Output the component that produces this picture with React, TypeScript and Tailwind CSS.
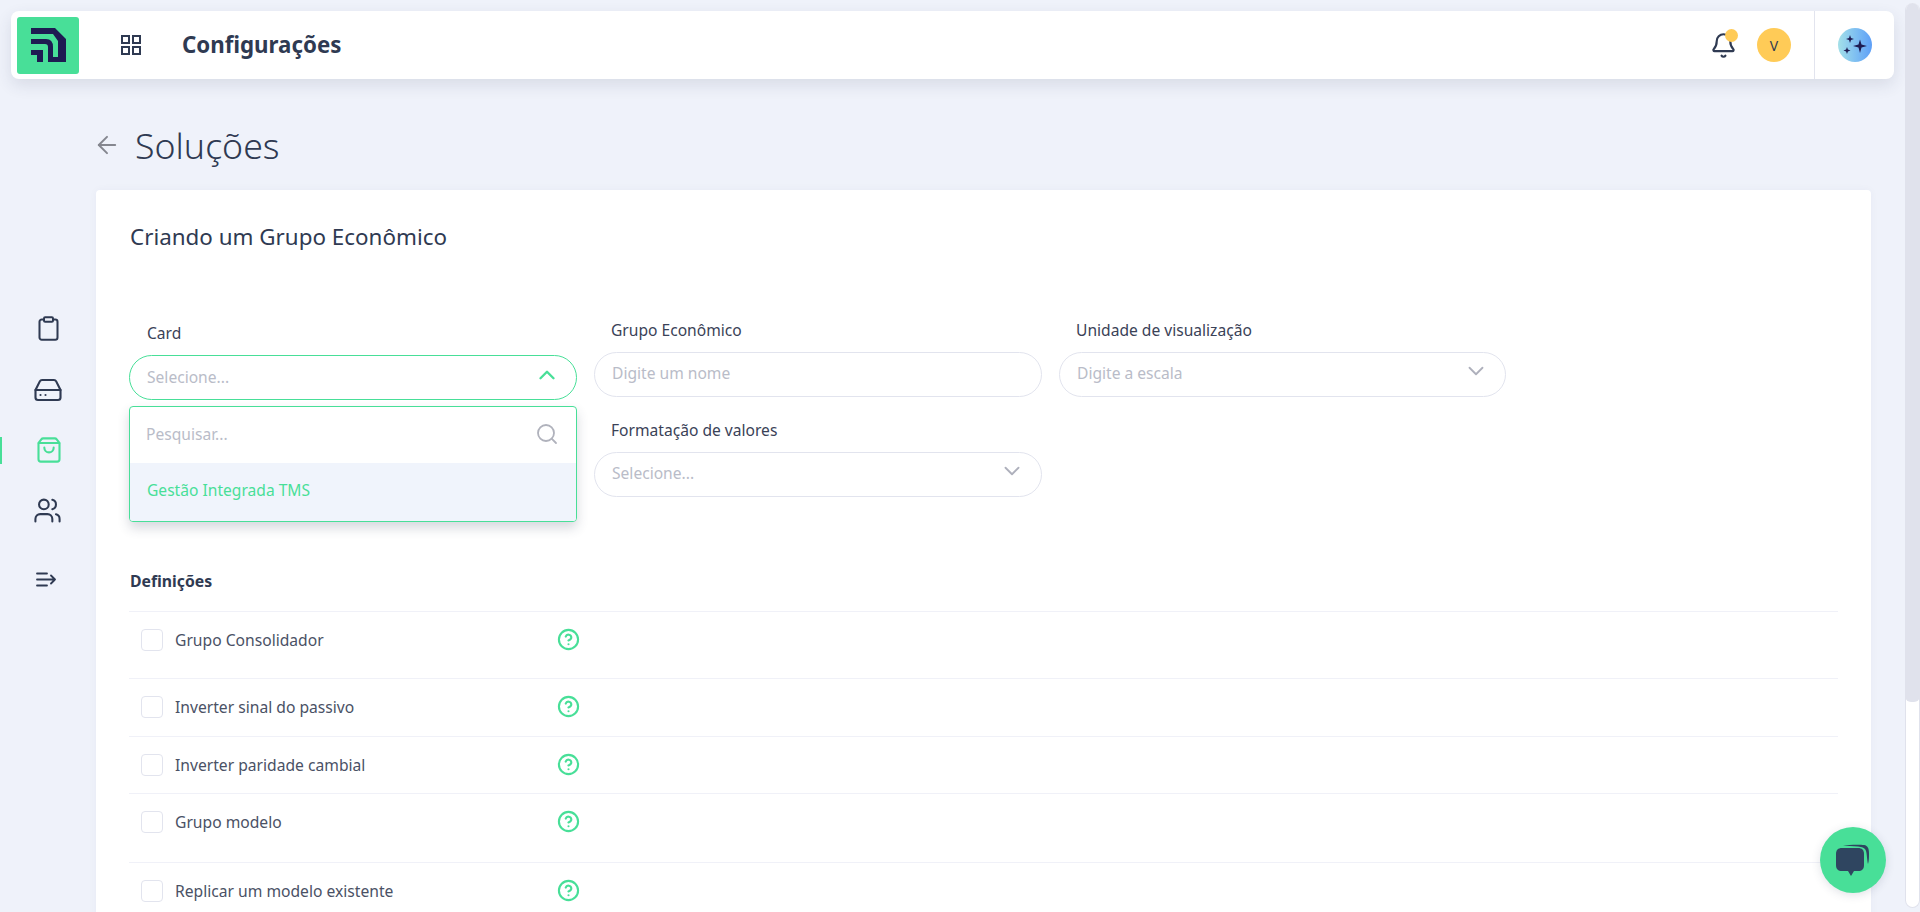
import React from 'react';
import { ArrowLeft, Bell, ChevronDown, ChevronUp, CircleHelp, Clipboard, HardDrive, Search, ShoppingBag, Users } from 'lucide-react';

const font = "font-['Noto_Sans',sans-serif]";

function Logo() {
  return (
    <div className="flex h-[57px] w-[62px] items-center justify-center rounded-[3px] bg-[#48df98]">
      <svg width="35" height="34" viewBox="0 0 35 34" fill="#1e1b52">
        <path d="M0 0H24L35 11V34H17V19Q17 16 14 16H0V11H15Q22 11 22 19V29H27V13L22 6H0Z" />
        <path d="M0 22H12V34H6V27H0Z" />
      </svg>
    </div>
  );
}

function SparklesIcon() {
  return (
    <svg width="34" height="34" viewBox="0 0 34 34" fill="#1e1b52" className="rounded-full bg-gradient-to-r from-[#a4e0e8] to-[#5e9ff7]">
      <path d="M12 7l1 3 3 1-3 1-1 3-1-3-3-1 3-1z" />
      <path d="M22 11.5l1.5 5 5.5 1.500-5.500 1.500-1.500 5.500-1.500-5.500-5.500-1.500 5.500-1.500z" />
      <path d="M9 19l.9 2.600 2.600.9-2.600.9-.9 2.600-.9-2.600-2.600-.9 2.600-.9z" />
    </svg>
  );
}

function Field({ label, placeholder, chevron }: { label: string; placeholder: string; chevron?: boolean }) {
  return (
    <div>
      <label className="block pl-[17px] text-[15.6px] leading-[22px] text-[#3a4257]">{label}</label>
      <div className="mt-[11px] flex h-[45px] items-center justify-between rounded-full border border-[#e2e4ee] pl-[17px] pr-[16px] text-[15.6px] text-[#b9bcc8]">
        <span className="pb-[1px]">{placeholder}</span>
        {chevron && <ChevronDown className="mb-[7px] h-[26px] w-[26px] text-[#aeb0bc]" strokeWidth={1.7} />}
      </div>
    </div>
  );
}

const definitions = [
  { label: 'Grupo Consolidador', h: 'h-[67px]' },
  { label: 'Inverter sinal do passivo', h: 'h-[58px]' },
  { label: 'Inverter paridade cambial', h: 'h-[57px]' },
  { label: 'Grupo modelo', h: 'h-[69px]' },
  { label: 'Replicar um modelo existente', h: 'h-[69px]' },
];

export default function App() {
  return (
    <div className={`relative flex h-[912px] overflow-hidden bg-[#eff2fa] ${font}`}>
      <div className="flex min-w-0 flex-1 flex-col">
        {/* top bar */}
        <header className="z-10 ml-[11px] mr-[11px] mt-[11px] flex h-[68px] items-center rounded-[8px] bg-white pl-[6px] shadow-[0_6px_16px_rgba(50,60,90,0.12)]">
          <Logo />
          <svg width="20" height="20" viewBox="0 0 20 20" fill="none" stroke="#2f3a52" strokeWidth="2" className="ml-[42px]">
            <rect x="1" y="1" width="7" height="7" />
            <rect x="12" y="1" width="7" height="7" />
            <rect x="1" y="12" width="7" height="7" />
            <rect x="12" y="12" width="7" height="7" />
          </svg>
          <span className="ml-[41px] text-[22.3px] font-bold text-[#2f3a52]">Configurações</span>
          <div className="ml-auto flex h-full items-center">
            <div className="relative">
              <Bell className="h-[27px] w-[27px] text-[#2f3a52]" strokeWidth={1.9} />
              <span className="absolute right-[-1px] top-[-3px] h-[13px] w-[13px] rounded-full bg-[#ffcb57]" />
            </div>
            <div className="ml-[20px] flex h-[34px] w-[34px] items-center justify-center rounded-full bg-[#ffcb57] text-[14px] text-[#2f3a52]">V</div>
            <div className="ml-[23px] flex h-full w-[80px] items-center justify-center border-l border-[#e2e4ee]">
              <SparklesIcon />
            </div>
          </div>
        </header>

        <div className="flex min-h-0 flex-1">
          {/* side nav */}
          <nav className="relative flex w-[96px] shrink-0 flex-col pt-[219px] text-[#2f3a52]">
            <div className="flex h-[61px] items-center pl-[35px]"><Clipboard className="h-[27px] w-[27px]" strokeWidth={1.8} /></div>
            <div className="flex h-[61px] items-center pl-[33px]"><HardDrive className="h-[30px] w-[30px]" strokeWidth={1.7} /></div>
            <div className="relative flex h-[60px] items-center pl-[35px] text-[#48df98]">
              <span className="absolute left-0 top-[17px] h-[27px] w-[2px] bg-[#48df98]" />
              <ShoppingBag className="h-[28px] w-[28px]" strokeWidth={1.8} />
            </div>
            <div className="flex h-[61px] items-center pl-[33px]"><Users className="h-[29px] w-[29px]" strokeWidth={1.7} /></div>
            <div className="flex h-[77px] items-center pl-[36px]">
              <svg width="20" height="15" viewBox="0 0 20 15" fill="none" stroke="#2f3a52" strokeWidth="1.800" strokeLinecap="round" strokeLinejoin="round">
                <path d="M1 1.500h10M1 7.500h18M1 13.500h10M15 3.500l4 4-4 4" />
              </svg>
            </div>
          </nav>

          <main className="min-w-0 flex-1 pr-[34px]">
            <div className="flex h-[111px] items-center pt-[23px]">
              <ArrowLeft className="-ml-[3px] -mt-[2px] h-[28px] w-[28px] text-[#85878f]" strokeWidth={1.7} />
              <h1 className="ml-[14px] text-[35.7px] font-light text-[#2f3a52]">Soluções</h1>
            </div>

            <section className="rounded-[4px] bg-white pl-[33px] pr-[33px] pt-[31px] shadow-[0_0_8px_rgba(50,60,90,0.04)]">
              <h2 className="pl-px text-[22.4px] leading-[32px] text-[#2f3a52]">Criando um Grupo Econômico</h2>

              <div className="mt-[66px] grid grid-cols-[448px_448px_447px] gap-x-[17px] gap-y-[22px]">
                <div className="relative row-span-2 pt-[2px]">
                  <label className="block pl-[18px] text-[15.6px] leading-[24px] text-[#3a4257]">Card</label>
                  <div className="mt-[10px] flex h-[45px] items-center justify-between rounded-full border border-[#48df98] pl-[17px] pr-[16px] text-[15.6px] text-[#b9bcc8]">
                    <span>Selecione...</span>
                    <ChevronUp className="mb-[6px] h-[26px] w-[26px] text-[#48df98]" strokeWidth={2.2} />
                  </div>
                  {/* open dropdown */}
                  <div className="absolute left-0 right-0 top-[87px] z-10 overflow-hidden rounded-[4px] border border-[#48df98] bg-white shadow-[0_6px_12px_rgba(50,60,90,0.2)]">
                    <div className="flex h-[56px] items-center justify-between pl-[16px] pr-[17px] text-[15.6px] text-[#b9bcc8]">
                      <span>Pesquisar...</span>
                      <Search className="mb-[2px] h-[24px] w-[24px] text-[#b0b2bc]" strokeWidth={1.8} />
                    </div>
                    <div className="flex h-[58px] items-center bg-[#f0f4fc] pb-[2px] pl-[17px] text-[15.6px] text-[#48df98]">Gestão Integrada TMS</div>
                  </div>
                </div>
                <Field label="Grupo Econômico" placeholder="Digite um nome" />
                <Field label="Unidade de visualização" placeholder="Digite a escala" chevron />
                <Field label="Formatação de valores" placeholder="Selecione..." chevron />
              </div>

              <h3 className="mt-[72px] pl-px text-[15.8px] font-bold leading-[24px] text-[#2f3a52]">Definições</h3>

              <div className="mt-[18px]">
                {definitions.map((d) => (
                  <div key={d.label} className={`flex ${d.h} items-start border-t border-[#f0f1f8] pl-[12px] pt-[17px]`}>
                    <span className="h-[22px] w-[22px] rounded-[4px] border border-[#e2e4ee] bg-white" />
                    <span className="ml-[12px] w-[382px] text-[15.65px] leading-[22px] text-[#4a5165]">{d.label}</span>
                    <CircleHelp className="-mt-px h-[23px] w-[23px] text-[#48df98]" strokeWidth={2.2} />
                  </div>
                ))}
              </div>
            </section>
          </main>
        </div>
      </div>

      {/* page scrollbar */}
      <div className="z-10 mb-[4px] mt-[3px] w-[15px] overflow-hidden rounded-full border-x border-b border-[#e0e2ec] bg-white">
        <div className="-mx-px h-[699px] rounded-b-[6px] bg-[#e0e2ec]" />
      </div>

      {/* chat button */}
      <button className="absolute bottom-[19px] right-[34px] z-20 flex h-[66px] w-[66px] items-center justify-center rounded-full bg-[#48df98] shadow-[0_2px_10px_rgba(50,60,90,0.15)]">
        <svg width="34" height="33" viewBox="0 0 34 33" fill="#2f4560">
          <path d="M7 2C12 .5 24 .5 28 1C32 1.500 33 5 33 9C33 13 33 17 32 20C31 16 31 10 30 7C29 4 26 3 22 2.600C17 2.200 11 2 7 2Z" />
          <path d="M6 4h16c4 0 6 2 6 6v11c0 4-2 6-6 6h-4l-3 5-3-5H6c-4 0-6-2-6-6V10c0-4 2-6 6-6z" />
        </svg>
      </button>
    </div>
  );
}
